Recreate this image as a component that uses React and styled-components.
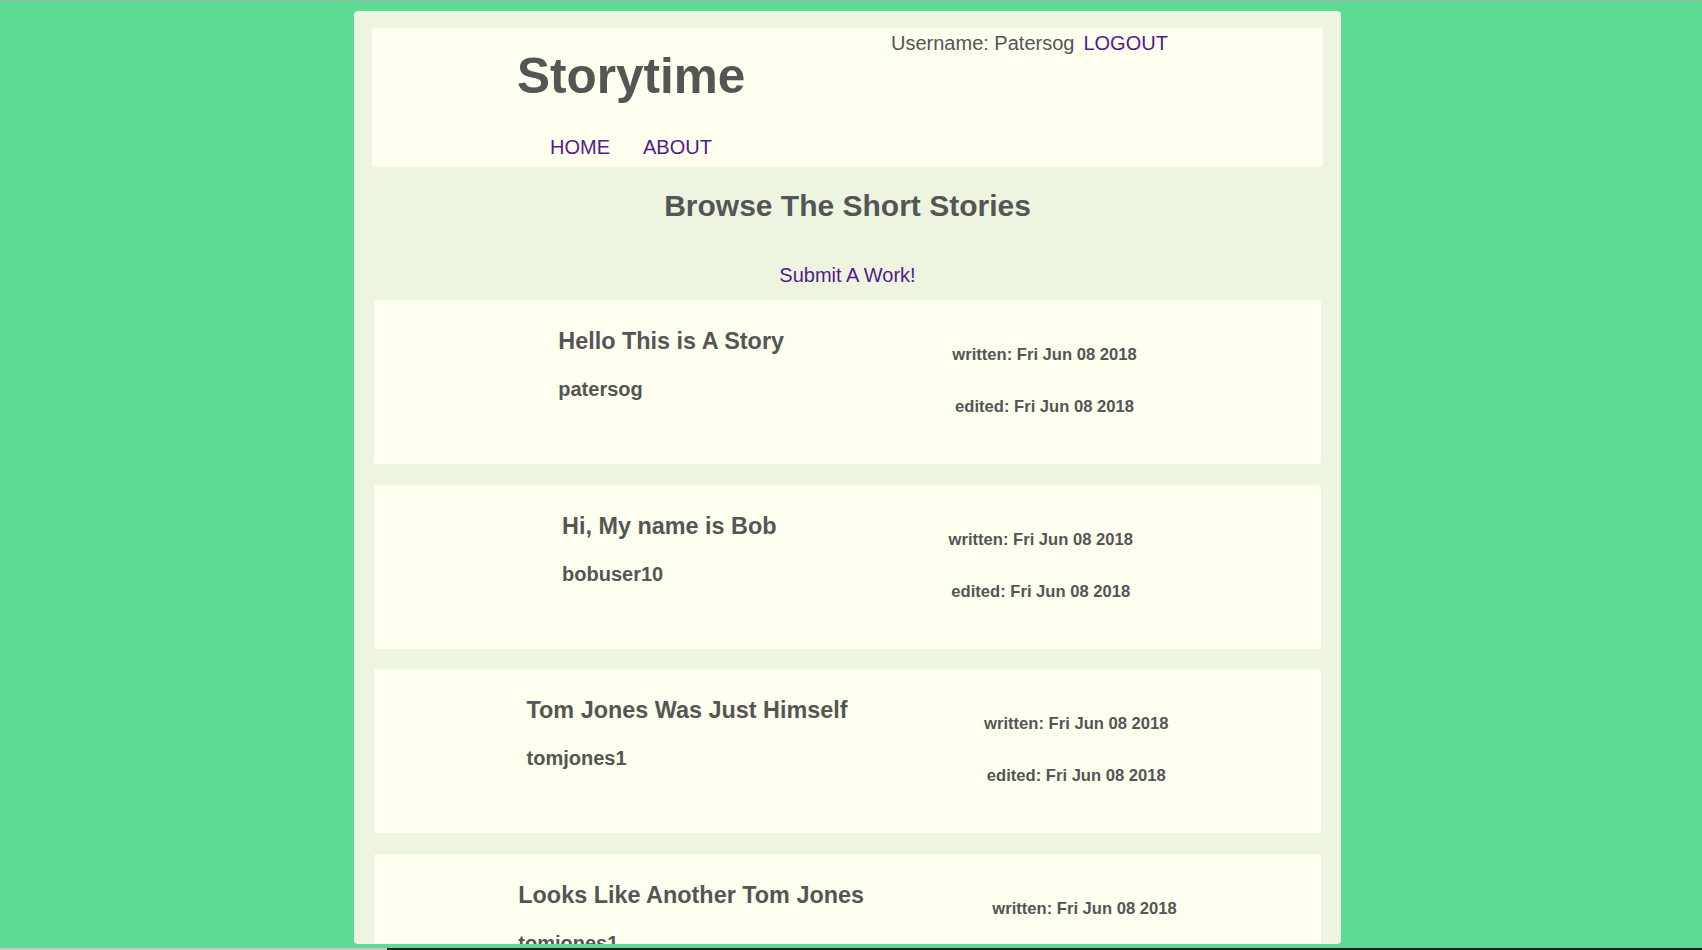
import React from 'react'
import styled, { createGlobalStyle } from 'styled-components'

const GlobalStyle = createGlobalStyle`
  html, body {
    margin: 0;
    padding: 0;
    overflow: hidden;
  }
  body {
    background: #5cdb95;
    font-family: "Liberation Sans", Arial, sans-serif;
    color: #555;
  }
`;

const Page = styled.div`
  height: 950px;
  display: flex;
  flex-direction: column;
`;

const TopRule = styled.div`
  height: 1px;
  background: #a8a8a8;
`;

const Stage = styled.div`
  flex: 1;
  padding: 10px 7px 0 0;
  overflow: hidden;
`;

const BottomStrip = styled.div`
  height: 2px;
  display: flex;
  span:first-child {
    width: 387px;
    background: #c9c9c9;
  }
  span:last-child {
    flex: 1;
    background: #1f1f1f;
  }
`;

const Container = styled.main`
  width: 987px;
  height: 933px;
  margin: 0 auto;
  box-sizing: border-box;
  padding: 17px 18px;
  background: #edf5e1;
  border-radius: 4px;
  overflow: hidden;
`;

const Header = styled.header`
  display: flex;
  align-items: flex-start;
  background: #fffff0;
  border-radius: 3px;
  padding-bottom: 8px;
`;

const Brand = styled.div`
  width: 519px;
  box-sizing: border-box;
  padding-left: 145px;
`;

const Title = styled.h1`
  margin: 20px 0 0;
  font-size: 49.5px;
  line-height: 56px;
  font-weight: bold;
  color: #555;
`;

const Nav = styled.nav`
  display: flex;
  gap: 33px;
  margin: 32px 0 0 33px;
`;

const Link = styled.a`
  color: #551a8b;
  text-decoration: none;
  font-size: 20px;
  line-height: 23px;
  cursor: pointer;
`;

const UserBar = styled.div`
  margin-top: 4px;
  font-size: 20px;
  line-height: 23px;
  display: flex;
  ${Link} {
    margin-left: 9px;
  }
`;

const Heading = styled.h2`
  margin: 21px 0 0;
  text-align: center;
  font-size: 30px;
  line-height: 35px;
  font-weight: bold;
`;

const SubmitRow = styled.div`
  margin-top: 41px;
  text-align: center;
`;

const StoryList = styled.div`
  display: flex;
  flex-direction: column;
  gap: 20.5px;
  margin: 13px 2px 0;
`;

const Card = styled.article`
  height: 164px;
  flex-shrink: 0;
  box-sizing: border-box;
  padding: 0 16px;
  background: #fffff0;
  border-radius: 3px;
  display: flex;
  justify-content: space-evenly;
  align-items: flex-start;
`;

const StoryInfo = styled.div`
  h3 {
    margin: 28px 0 0;
    font-size: 23.4px;
    line-height: 27px;
    font-weight: bold;
  }
  h4 {
    margin: 23px 0 0;
    font-size: 20px;
    line-height: 23px;
    font-weight: bold;
  }
`;

const Dates = styled.div`
  text-align: center;
  h5 {
    margin: 0;
    font-size: 16.6px;
    line-height: 19px;
    font-weight: bold;
  }
  h5:first-child {
    margin-top: 45px;
  }
  h5 + h5 {
    margin-top: 33px;
  }
`;

const stories = [
  { title: 'Hello This is A Story', author: 'patersog' },
  { title: 'Hi, My name is Bob', author: 'bobuser10' },
  { title: 'Tom Jones Was Just Himself', author: 'tomjones1' },
  { title: 'Looks Like Another Tom Jones', author: 'tomjones1' },
];

function StoryCard({ title, author }) {
  return (
    <Card>
      <StoryInfo>
        <h3>{title}</h3>
        <h4>{author}</h4>
      </StoryInfo>
      <Dates>
        <h5>written: Fri Jun 08 2018</h5>
        <h5>edited: Fri Jun 08 2018</h5>
      </Dates>
    </Card>
  )
}

export default function App() {
  return (
    <>
      <GlobalStyle />
      <Page>
        <TopRule />
        <Stage>
          <Container>
            <Header>
              <Brand>
                <Title>Storytime</Title>
                <Nav>
                  <Link>HOME</Link>
                  <Link>ABOUT</Link>
                </Nav>
              </Brand>
              <UserBar>
                <span>Username: Patersog</span>
                <Link>LOGOUT</Link>
              </UserBar>
            </Header>
            <Heading>Browse The Short Stories</Heading>
            <SubmitRow>
              <Link>Submit A Work!</Link>
            </SubmitRow>
            <StoryList>
              {stories.map((s, i) => (
                <StoryCard key={i} {...s} />
              ))}
            </StoryList>
          </Container>
        </Stage>
        <BottomStrip>
          <span />
          <span />
        </BottomStrip>
      </Page>
    </>
  )
}
